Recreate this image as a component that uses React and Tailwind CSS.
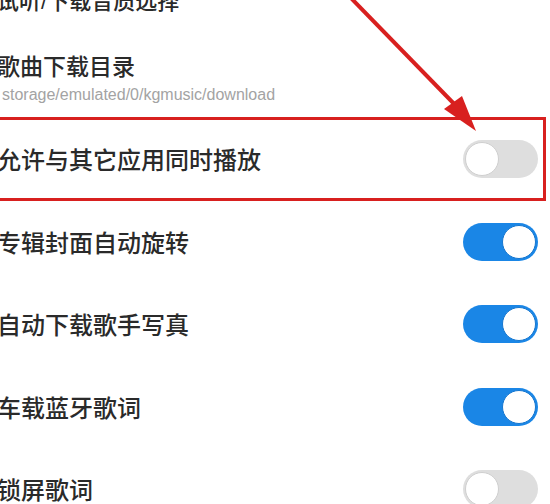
import React from "react";

const Toggle = ({ on }) => (
  <div
    className={`w-[75px] h-[38px] rounded-full flex items-center px-[2px] shrink-0 ${
      on ? "bg-[#1a86e6] justify-end" : "bg-[#dedede] justify-start"
    }`}
  >
    <div
      className={`w-[34px] h-[34px] rounded-full bg-white border ${
        on ? "border-[#1576cf]" : "border-[#cfcfcf]"
      }`}
    />
  </div>
);

const Row = ({ title, sub, toggle, size = "text-[24px]", extra = "" }) => (
  <div className={`h-[82.5px] flex items-center justify-between pr-[12px] ${extra}`}>
    <div className="flex flex-col ml-[-3px]">
      <span className={`${size} font-medium text-[#2a2a2a] leading-tight`}>
        {title}
      </span>
      {sub && (
        <span
          className="text-[16px] text-[#a3a3a3] leading-tight mt-[5px] pl-[5px]"
          style={{ fontFamily: '"Liberation Sans", Arial, sans-serif' }}
        >
          {sub}
        </span>
      )}
    </div>
    {toggle !== undefined && <Toggle on={toggle} />}
  </div>
);

export default function App() {
  return (
    <div
      className="relative w-[550px] h-[504px] overflow-hidden bg-white"
      style={{ fontFamily: '"Noto Sans CJK SC", "Noto Sans", sans-serif' }}
    >
      <div className="flex flex-col mt-[-47px]">
        <Row
          title={
            <>
              试听<span className="font-['Liberation_Sans']">/</span>下载音质选择
            </>
          }
          size="text-[22px]"
          extra="pt-[12px]"
        />
        <Row
          title="歌曲下载目录"
          sub="storage/emulated/0/kgmusic/download"
          size="text-[23px]"
          extra="pt-[2px]"
        />
        <Row title="允许与其它应用同时播放" toggle={false} />
        <Row title="专辑封面自动旋转" toggle={true} />
        <Row title="自动下载歌手写真" toggle={true} />
        <Row title="车载蓝牙歌词" toggle={true} />
        <Row title="锁屏歌词" toggle={false} />
      </div>

      {/* red highlight box */}
      <div className="absolute left-[-4px] top-[117px] w-[550px] h-[84px] border-[3px] border-[#d8201f]" />

      {/* arrow */}
      <svg
        className="absolute inset-0 pointer-events-none"
        width="550"
        height="504"
        viewBox="0 0 550 504"
      >
        <line
          x1="349"
          y1="-4"
          x2="462"
          y2="112"
          stroke="#d8201f"
          strokeWidth="4"
        />
        <polygon points="476,131 444,109 462,96" fill="#d8201f" />
      </svg>
    </div>
  );
}
